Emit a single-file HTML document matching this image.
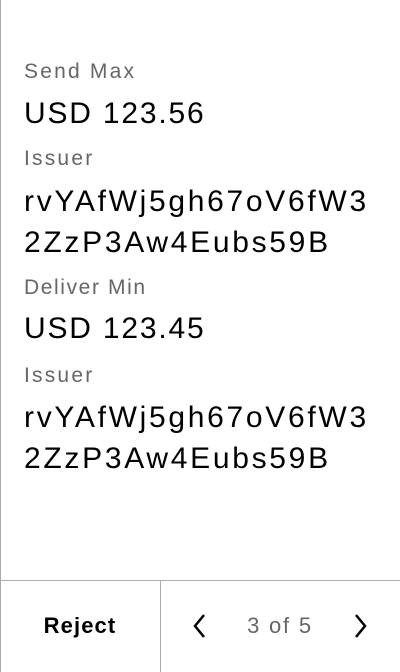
<!DOCTYPE html>
<html><head><style>
body{margin:0;width:400px;height:672px;background:#fff;position:relative;overflow:hidden;font-family:"Liberation Sans",sans-serif}
.l{position:absolute;left:24px;font-size:21px;color:#666;line-height:24px;white-space:nowrap;letter-spacing:2.2px}
.v{position:absolute;left:24px;font-size:30px;color:#000;line-height:34px;white-space:nowrap;letter-spacing:1.8px}
.a{letter-spacing:2.7px}
</style></head><body>
<div style="position:absolute;left:0;top:0;width:1px;height:672px;background:#aaa"></div>
<div class="l" style="top:60px">Send Max</div>
<div class="v" style="top:97px">USD 123.56</div>
<div class="l" style="top:147px">Issuer</div>
<div class="v a" style="top:185px">rvYAfWj5gh67oV6fW3</div>
<div class="v a" style="top:226px">2ZzP3Aw4Eubs59B</div>
<div class="l" style="top:276px;letter-spacing:1.6px">Deliver Min</div>
<div class="v" style="top:312px">USD 123.45</div>
<div class="l" style="top:364px">Issuer</div>
<div class="v a" style="top:401px">rvYAfWj5gh67oV6fW3</div>
<div class="v a" style="top:442px">2ZzP3Aw4Eubs59B</div>
<div style="position:absolute;left:0;top:580px;width:400px;height:1px;background:#aaa"></div>
<div style="position:absolute;left:160px;top:580px;width:1px;height:92px;background:#aaa"></div>
<div style="position:absolute;left:0;width:160px;top:612px;text-align:center;font-size:22px;font-weight:bold;line-height:28px;letter-spacing:1.1px">Reject</div>
<div style="position:absolute;left:230px;width:100px;top:612px;text-align:center;font-size:22px;color:#666;line-height:28px;letter-spacing:1.8px">3 of 5</div>
<svg style="position:absolute;left:190px;top:613px" width="20" height="26"><path d="M14 2 L5 13 L14 24" fill="none" stroke="#000" stroke-width="2.5"/></svg>
<svg style="position:absolute;left:350px;top:613px" width="20" height="26"><path d="M6 2 L15 13 L6 24" fill="none" stroke="#000" stroke-width="2.5"/></svg>
</body></html>
